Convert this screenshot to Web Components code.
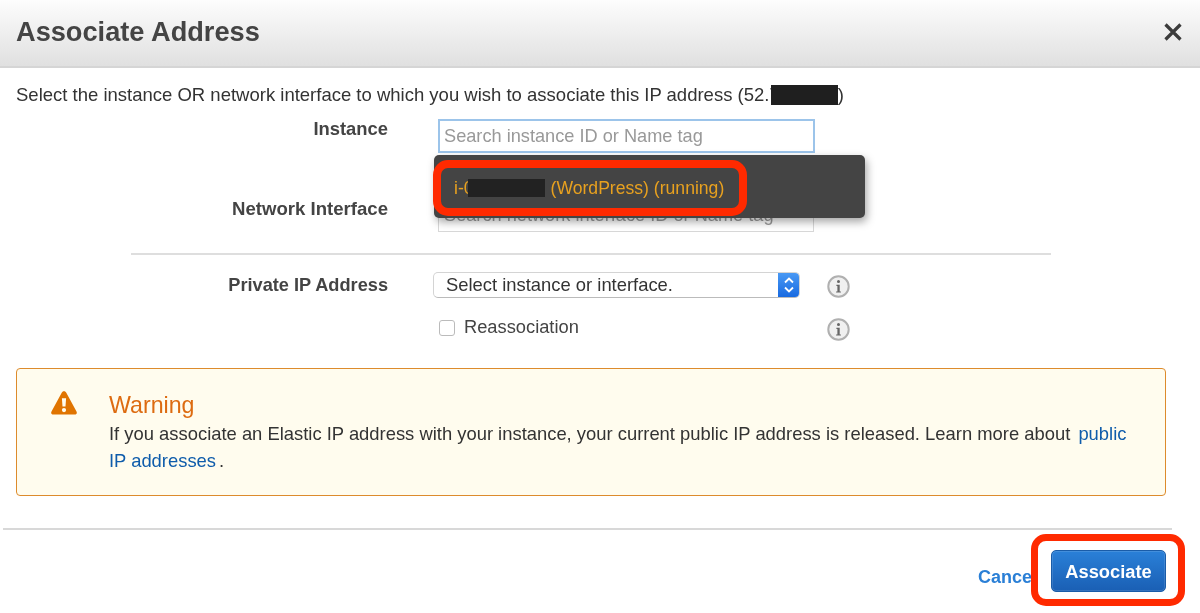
<!DOCTYPE html>
<html>
<head>
<meta charset="utf-8">
<title>Associate Address</title>
<style>
    html, body { margin: 0; padding: 0; background: #fff; }
    body { font-family: "Liberation Sans", Arial, sans-serif; color: #333; overflow: hidden; }
</style>
</head>
<body>
<aa-dialog>
    <aa-header slot="header">Associate Address</aa-header>
    <aa-intro slot="intro"></aa-intro>
    <aa-row slot="form" label="Instance" style="height:34px;margin-top:13px;--label-size:18.4px">
        <aa-search placeholder="Search instance ID or Name tag" focused></aa-search>
        <aa-dropdown></aa-dropdown>
    </aa-row>
    <aa-row slot="form" label="Network Interface" style="height:34px;margin-top:45px;--label-top:1px;--label-size:18.6px">
        <aa-search placeholder="Search network interface ID or Name tag"></aa-search>
    </aa-row>
    <aa-divider slot="form"></aa-divider>
    <aa-row slot="form" label="Private IP Address" center style="height:26px;--label-size:18.2px">
        <aa-select>Select instance or interface.</aa-select>
        <aa-info style="top:3px"></aa-info>
    </aa-row>
    <aa-row slot="form" style="height:26px;margin-top:18px">
        <aa-check>Reassociation</aa-check>
        <aa-info></aa-info>
    </aa-row>
    <aa-warning slot="warning"></aa-warning>
    <aa-footer slot="footer"></aa-footer>
</aa-dialog>

<script>
class AaDialog extends HTMLElement {
    constructor() {
        super();
        this.shadow = this.attachShadow({ mode: 'open' });
    }
    connectedCallback() {
        this.shadow.innerHTML = `
        <style>
            :host { display: block; width: 1200px; height: 613px; overflow: hidden; filter: blur(.35px); }
            .form { display: flex; flex-direction: column; }
        </style>
        <slot name="header"></slot>
        <slot name="intro"></slot>
        <div class="form"><slot name="form"></slot></div>
        <slot name="warning"></slot>
        <slot name="footer"></slot>
        `;
    }
}

class AaHeader extends HTMLElement {
    constructor() {
        super();
        this.shadow = this.attachShadow({ mode: 'open' });
    }
    connectedCallback() {
        this.shadow.innerHTML = `
        <style>
            :host {
                display: flex; align-items: center; justify-content: space-between;
                height: 64px; padding: 0 16px 2px;
                background: linear-gradient(#fdfdfd, #e0e0e0);
                border-bottom: 2px solid #d5d5d5;
            }
            h1 { margin: 0; font-size: 27.2px; font-weight: bold; color: #444; }
            svg { display: block; margin-right: 2px; }
        </style>
        <h1><slot></slot></h1>
        <svg width="18" height="18" viewBox="0 0 18 18"><path d="M1.5 1.5L16.5 16.5M16.5 1.5L1.5 16.5" stroke="#3c3c3c" stroke-width="3.2" fill="none"/></svg>
        `;
    }
}

class AaIntro extends HTMLElement {
    constructor() {
        super();
        this.shadow = this.attachShadow({ mode: 'open' });
    }
    connectedCallback() {
        this.shadow.innerHTML = `
        <style>
            :host { display: block; padding: 16px 16px 0; height: 22px; font-size: 18.5px; line-height: 21px; color: #333; white-space: nowrap; }
            .hide { display: inline-block; width: 67px; height: 20px; background: #1f1f1f; vertical-align: -4px; margin-left: -9px; }
        </style>
        Select the instance OR network interface to which you wish to associate this IP address (52.7<span class="hide"></span>)
        `;
    }
}

class AaDivider extends HTMLElement {
    constructor() {
        super();
        this.shadow = this.attachShadow({ mode: 'open' });
    }
    connectedCallback() {
        this.shadow.innerHTML = `
        <style>
            :host { display: block; height: 2px; background: #dedede; margin: 21px 149px 17px 131px; }
        </style>
        `;
    }
}

class AaRow extends HTMLElement {
    constructor() {
        super();
        this.shadow = this.attachShadow({ mode: 'open' });
    }
    connectedCallback() {
        const center = this.hasAttribute('center');
        this.shadow.innerHTML = `
        <style>
            :host { display: flex; position: relative; align-items: ${center ? 'center' : 'flex-start'}; }
            label { width: 388px; text-align: right; font-size: var(--label-size, 18.4px); font-weight: bold; color: #444; line-height: 20px; padding-top: var(--label-top, 0); }
            .control { display: flex; align-items: center; margin-left: 45px; position: relative; }
        </style>
        <label>${this.getAttribute('label') || ''}</label>
        <div class="control"><slot></slot></div>
        `;
    }
}

class AaSearch extends HTMLElement {
    constructor() {
        super();
        this.shadow = this.attachShadow({ mode: 'open' });
    }
    connectedCallback() {
        const focused = this.hasAttribute('focused');
        this.shadow.innerHTML = `
        <style>
            :host { display: block; margin-left: 5px; }
            .box {
                box-sizing: border-box; width: ${focused ? 377 : 376}px; height: 34px;
                border: ${focused ? '2px solid #9cc4ea' : '1px solid #d8d8d8'};
                padding-left: ${focused ? 4 : 5}px;
                font-size: 18.2px; line-height: ${focused ? 30 : 32}px; color: #999; white-space: nowrap; overflow: hidden;
            }
        </style>
        <div class="box">${this.getAttribute('placeholder')}</div>
        `;
    }
}

class AaDropdown extends HTMLElement {
    constructor() {
        super();
        this.shadow = this.attachShadow({ mode: 'open' });
    }
    connectedCallback() {
        this.shadow.innerHTML = `
        <style>
            :host {
                position: absolute; left: 1px; top: 36px; width: 431px; height: 63px; z-index: 5;
                background: #444; border-radius: 5px; box-shadow: 2px 4px 9px rgba(0,0,0,.35);
                font-size: 17.6px; color: #e8a11f;
            }
            .item {
                position: absolute; left: -1px; top: 5px; width: 314px; height: 56px; box-sizing: border-box;
                border: 8px solid #ff2a00; border-radius: 15px;
                padding-left: 13px; line-height: 40px; white-space: nowrap;
            }
            .hide { display: inline-block; width: 77px; height: 18px; background: #222; vertical-align: -3px; margin-left: -6px; margin-right: 6px; }
        </style>
        <div class="item">i-0<span class="hide"></span>(WordPress) (running)</div>
        `;
    }
}

class AaSelect extends HTMLElement {
    constructor() {
        super();
        this.shadow = this.attachShadow({ mode: 'open' });
    }
    connectedCallback() {
        this.shadow.innerHTML = `
        <style>
            :host {
                display: flex; box-sizing: border-box; width: 367px; height: 26px;
                border: 1px solid #d4d4d4; border-bottom-color: #bbb; border-radius: 5px; background: #fff;
                font-size: 18.4px; line-height: 24px; color: #333; overflow: hidden;
            }
            .text { flex: 1; padding-left: 12px; white-space: nowrap; }
            .arrows {
                width: 22px; margin: -1px -1px -1px 0;
                background: linear-gradient(#4b9bf5, #1668e0);
                display: flex; align-items: center; justify-content: center;
            }
        </style>
        <div class="text"><slot></slot></div>
        <div class="arrows">
            <svg width="12" height="20" viewBox="0 0 12 20"><path d="M2 7.5L6 3.5L10 7.5M2 12.5L6 16.5L10 12.5" stroke="#fff" stroke-width="1.8" fill="none"/></svg>
        </div>
        `;
    }
}

class AaInfo extends HTMLElement {
    constructor() {
        super();
        this.shadow = this.attachShadow({ mode: 'open' });
    }
    connectedCallback() {
        this.shadow.innerHTML = `
        <style>
            :host { display: block; position: absolute; left: 394px; top: 2px; width: 23px; height: 23px; }
            svg { display: block; }
        </style>
        <svg width="23" height="23" viewBox="0 0 23 23">
            <circle cx="11.5" cy="11.5" r="10.2" fill="#f0f0f0" stroke="#b0b0b0" stroke-width="2"/>
            <circle cx="11.5" cy="6.6" r="1.5" fill="#666"/>
            <path d="M9.4 9.8H12.7V16.4H13.9V17.5H9.1V16.4H10.4V10.9H9.4Z" fill="#666"/>
        </svg>
        `;
    }
}

class AaCheck extends HTMLElement {
    constructor() {
        super();
        this.shadow = this.attachShadow({ mode: 'open' });
    }
    connectedCallback() {
        this.shadow.innerHTML = `
        <style>
            :host { display: flex; align-items: center; gap: 9px; margin-left: 6px; margin-top: -2px; height: 26px; font-size: 18.3px; color: #444; }
            .box { box-sizing: border-box; width: 16px; height: 16px; border: 1px solid #bbb; border-radius: 3px; background: #fff; margin-top: 2px; }
        </style>
        <div class="box"></div>
        <span><slot></slot></span>
        `;
    }
}

class AaWarning extends HTMLElement {
    constructor() {
        super();
        this.shadow = this.attachShadow({ mode: 'open' });
    }
    connectedCallback() {
        this.shadow.innerHTML = `
        <style>
            :host {
                display: flex; box-sizing: border-box; margin: 26px 34px 0 16px; height: 128px;
                border: 1px solid #dd8b2c; border-radius: 4px; background: #fffcee;
                padding: 22px 30px 0 34px;
            }
            svg { flex: none; display: block; }
            .content { margin-left: 32px; }
            h2 { margin: 0 0 1px; font-size: 23.2px; font-weight: normal; color: #dd6b10; line-height: 28px; }
            p { margin: 0; font-size: 18.4px; line-height: 27px; color: #333; }
            a { color: #0f5cab; text-decoration: none; }
            .first { margin-left: 3px; }
            .dot { margin-left: 3px; }
        </style>
        <svg width="26" height="24" viewBox="0 0 26 24">
            <path fill-rule="evenodd" fill="#e07400" d="M13 0.3C14.2 0.3 14.9 1 15.3 1.8L25.5 20.4C26.4 22.1 25.5 23.6 23.7 23.6H2.3C0.5 23.6 -0.4 22.1 0.5 20.4L10.7 1.8C11.1 1 11.8 0.3 13 0.3ZM10.9 7.2L11.5 15.6H14.5L15.1 7.2ZM13 17A2.1 2.1 0 1 0 13 21.2A2.1 2.1 0 1 0 13 17Z"/>
        </svg>
        <div class="content">
            <h2>Warning</h2>
            <p>If you associate an Elastic IP address with your instance, your current public IP address is released. Learn more about <a class="first" href="#">public</a><br><a href="#">IP addresses</a><span class="dot">.</span></p>
        </div>
        `;
    }
}

class AaFooter extends HTMLElement {
    constructor() {
        super();
        this.shadow = this.attachShadow({ mode: 'open' });
    }
    connectedCallback() {
        this.shadow.innerHTML = `
        <style>
            :host { display: block; position: relative; margin: 32px 28px 0 3px; border-top: 2px solid #d8d8d8; height: 82px; }
            .actions { display: flex; justify-content: flex-end; align-items: center; padding-top: 20px; padding-right: 6px; gap: 19px; }
            .cancel { font-size: 18px; font-weight: bold; color: #2a7fd6; margin-top: 12px; width: 54px; white-space: nowrap; }
            button {
                width: 115px; height: 42px; padding: 1px 0 0; border: 1px solid #1a5ca8; border-radius: 5px;
                background: linear-gradient(#2a80d8, #1a5fb4);
                box-shadow: inset 0 0 0 1px rgba(255,255,255,.12);
                color: #fff; font: bold 18.3px "Liberation Sans", Arial, sans-serif;
            }
            .ring {
                position: absolute; right: -13px; top: 4px; box-sizing: border-box; width: 154px; height: 72px;
                border: 7.5px solid #ff2a00; border-radius: 15px; pointer-events: none;
            }
        </style>
        <div class="actions">
            <span class="cancel">Cancel</span>
            <button>Associate</button>
        </div>
        <div class="ring"></div>
        `;
    }
}

customElements.define('aa-dialog', AaDialog);
customElements.define('aa-header', AaHeader);
customElements.define('aa-intro', AaIntro);
customElements.define('aa-divider', AaDivider);
customElements.define('aa-row', AaRow);
customElements.define('aa-search', AaSearch);
customElements.define('aa-dropdown', AaDropdown);
customElements.define('aa-select', AaSelect);
customElements.define('aa-info', AaInfo);
customElements.define('aa-check', AaCheck);
customElements.define('aa-warning', AaWarning);
customElements.define('aa-footer', AaFooter);
</script>
</body>
</html>
